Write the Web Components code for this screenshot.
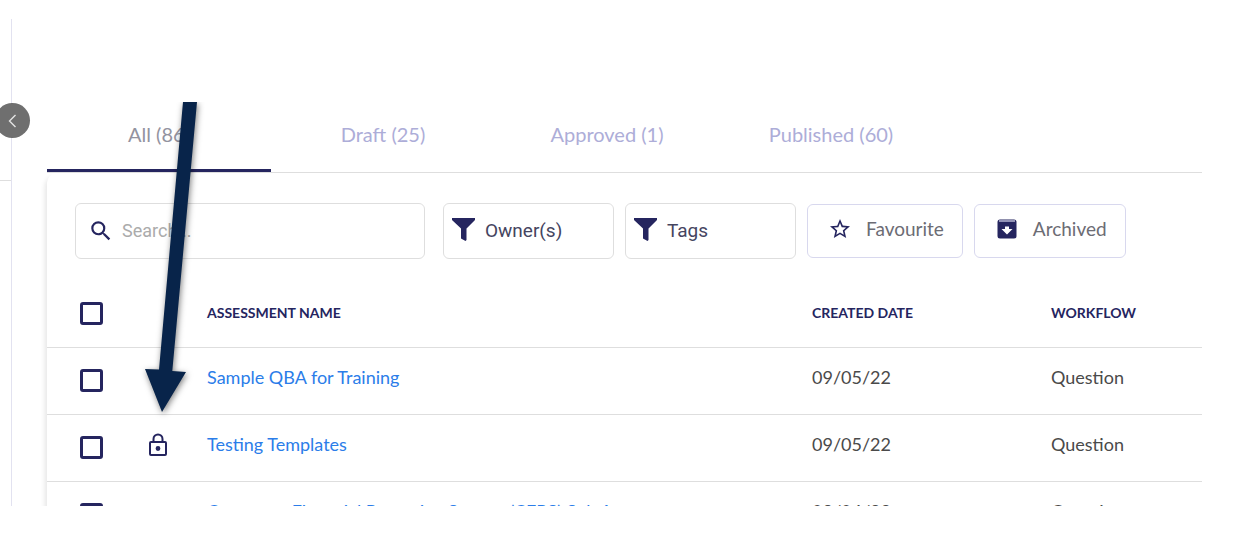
<!DOCTYPE html>
<html lang="en">
<head>
<meta charset="utf-8">
<meta name="viewport" content="width=device-width, initial-scale=1">
<title>Assessments</title>
<style>
  body {
    margin: 0; background: #fff; color: #4a4a4a;
    font: 18px/24px Lato, "Liberation Sans", sans-serif;
    --navy: #25255f; --line: #dedede;
  }
</style>
</head>
<body>
<qa-shell>
  <qa-sidebar slot="side"></qa-sidebar>
  <qa-tabs></qa-tabs>
  <qa-card>
    <qa-toolbar></qa-toolbar>
    <qa-table></qa-table>
  </qa-card>
  <qa-pointer slot="overlay"></qa-pointer>
</qa-shell>

<script>
'use strict';

const define = (name, html) => {
  customElements.define(name, class extends HTMLElement {
    constructor() {
      super();
      this.attachShadow({ mode: 'open' }).innerHTML = html;
    }
  });
};

/** Page frame: sidebar strip on the left, content on the right */
define('qa-shell', `
  <style>
    :host { display: flex; box-sizing: border-box; height: 100vh; padding: 19px 0 43px; }
    .frame { display: flex; flex: 1; min-width: 0; overflow: hidden; position: relative; }
    main { flex: 1; min-width: 0; margin-right: 40px; padding: 80px 0 0 35px; }
  </style>
  <div class="frame">
    <slot name="side"></slot>
    <main><slot></slot></main>
    <slot name="overlay"></slot>
  </div>
`);

define('qa-sidebar', `
  <style>
    :host { display: block; width: 11px; flex: none; border-right: 1px solid #e2e2f0; position: relative; }
    .head { height: 161px; border-bottom: 1px solid var(--line); }
    button {
      position: absolute; top: 84px; left: -5px; width: 35px; height: 35px; padding: 0;
      border: 0; border-radius: 50%; background: #6f6f6f; display: grid; place-items: center;
    }
  </style>
  <div class="head"></div>
  <button type="button" aria-label="Collapse menu">
    <svg width="16" height="16" viewBox="0 0 16 16" fill="none" stroke="#e4e4e4" stroke-width="1.4"><path d="M10.500 2 4.500 8l6 6"/></svg>
  </button>
`);

define('qa-tabs', `
  <style>
    :host { display: block; border-bottom: 1px solid var(--line); }
    nav { display: flex; }
    button {
      width: 224px; height: 73px; padding: 0; border: 0; border-bottom: 3px solid transparent;
      background: none; font: inherit; font-size: 20px; color: #adadd8;
    }
    button[aria-selected="true"] { color: #93939f; border-color: var(--navy); }
  </style>
  <nav role="tablist">
    <button role="tab" aria-selected="true">All (86)</button>
    <button role="tab" aria-selected="false">Draft (25)</button>
    <button role="tab" aria-selected="false">Approved (1)</button>
    <button role="tab" aria-selected="false">Published (60)</button>
  </nav>
`);

define('qa-card', `
  <style>
    :host {
      display: block; background: #fff; border-radius: 10px 0 0 0;
      box-shadow: -3px 3px 5px -1px rgba(0,0,0,.1);
      clip-path: inset(0 0 0 -10px);
    }
  </style>
  <slot></slot>
`);

define('qa-toolbar', `
  <style>
    :host { display: flex; align-items: center; padding: 30px 28px 21px; color: var(--navy); }
    svg { flex: none; }
    .search, button {
      box-sizing: border-box; display: flex; align-items: center;
      border: 1px solid #dedede; border-radius: 6px; background: #fff;
    }
    .search { width: 350px; height: 56px; padding: 0 12px; gap: 8px; }
    input {
      flex: 1; min-width: 0; border: 0; padding: 0; outline: 0; background: none;
      font: 18px/24px Roboto, sans-serif; color: #444;
    }
    input::placeholder { color: #ababab; opacity: 1; }
    .filter {
      width: 171px; height: 56px; margin-left: 11px; padding: 0 8px; gap: 10px;
      font: 19px/24px Roboto, sans-serif; color: #45455f;
    }
    .filter svg { margin-bottom: 4px; }
    .search + .filter { margin-left: 18px; }
    .toggle {
      height: 54px; margin-left: 11px; padding: 0 18px 4px 20px; gap: 14px;
      border-color: #d8d8ee; font: inherit; font-size: 19px; color: #6c6c74;
    }
    .toggle svg { color: var(--navy); }
  </style>
  <label class="search">
    <svg width="26" height="26" viewBox="0 0 24 24" fill="currentColor"><path d="M15.500 14h-.79l-.28-.27A6.470 6.470 0 0 0 16 9.500 6.500 6.500 0 1 0 9.500 16c1.610 0 3.090-.59 4.230-1.570l.27.28v.79l5 4.990L20.490 19l-4.990-5zm-6 0a4.500 4.500 0 1 1 0-9 4.500 4.500 0 0 1 0 9z"/></svg>
    <input type="text" placeholder="Search..." aria-label="Search">
  </label>
  <button type="button" class="filter">
    <svg width="23" height="23" viewBox="0 0 23 23" fill="#25255f"><path d="M0 0h23v2l-8.500 8.500V22l-1 1-4.500-2.500v-10L0 2z"/></svg>
    Owner(s)
  </button>
  <button type="button" class="filter">
    <svg width="23" height="23" viewBox="0 0 23 23" fill="#25255f"><path d="M0 0h23v2l-8.500 8.500V22l-1 1-4.500-2.500v-10L0 2z"/></svg>
    Tags
  </button>
  <button type="button" class="toggle">
    <svg width="24" height="24" viewBox="0 0 24 24" fill="currentColor"><path d="M22 9.240l-7.190-.62L12 2 9.190 8.630 2 9.240l5.460 4.730L5.820 21 12 17.270 18.180 21l-1.630-7.030L22 9.240zM12 15.400l-3.760 2.270 1-4.280-3.320-2.880 4.380-.38L12 6.100l1.710 4.040 4.380.38-3.320 2.880 1 4.280L12 15.400z"/></svg>
    Favourite
  </button>
  <button type="button" class="toggle">
    <svg width="24" height="24" viewBox="0 0 24 24"><rect x="2.500" y="2.500" width="19" height="19" rx="2.500" fill="currentColor"/><path d="M4 4h16" stroke="#b9b9d4" stroke-width="1.400"/><path d="M10 9.500h4v2.500h3.500L12 17.500 6.500 12H10z" fill="#fff"/></svg>
    Archived
  </button>
`);

const rows = [
  { name: 'Sample QBA for Training', date: '09/05/22', flow: 'Question' },
  { name: 'Testing Templates', date: '09/05/22', flow: 'Question', locked: true },
  { name: 'Corporate Financial Reporting System (CFRS) Sub A', date: '09/04/22', flow: 'Question' },
];

const lock = `<svg role="img" aria-label="Locked" width="20" height="24" viewBox="0 0 20 24" fill="none" stroke="#25255f" stroke-width="2"><rect x="2" y="9" width="16" height="13" rx="1"/><path d="M5.500 9V6a4.500 4.500 0 0 1 9 0v3"/><circle cx="10" cy="15.500" r="1.400" fill="#25255f"/></svg>`;

class QaTable extends HTMLElement {
  connectedCallback() {
    this.attachShadow({ mode: 'open' }).innerHTML = `
      <style>
        :host { display: block; }
        table { width: 100%; table-layout: fixed; border-collapse: collapse; }
        tr { height: 67px; border-bottom: 1px solid var(--line); }
        th, td { box-sizing: border-box; padding: 0; text-align: left; white-space: nowrap; }
        th { font-size: 14px; color: var(--navy); }
        td { padding-bottom: 8px; }
        th:first-child, td:first-child { padding: 0 0 0 33px; }
        .lock { padding: 0 0 6px 21px; }
        .check, .state { width: 80px; }
        .date { width: 239px; }
        .flow { width: 151px; }
        a { color: #2b7de9; text-decoration: none; }
        input {
          appearance: none; display: block; box-sizing: border-box; margin: 0;
          width: 23px; height: 23px; border: 3px solid var(--navy); border-radius: 3px;
        }
        input:checked { background: var(--navy); }
        svg { display: block; }
      </style>
      <table>
        <thead>
          <tr>
            <th class="check"><input type="checkbox" aria-label="Select all"></th>
            <th class="state"></th>
            <th>ASSESSMENT NAME</th>
            <th class="date">CREATED DATE</th>
            <th class="flow">WORKFLOW</th>
          </tr>
        </thead>
        <tbody>
          ${rows.map(r => `
            <tr>
              <td><input type="checkbox" aria-label="Select ${r.name}"></td>
              <td class="lock">${r.locked ? lock : ''}</td>
              <td><a href="#">${r.name}</a></td>
              <td>${r.date}</td>
              <td>${r.flow}</td>
            </tr>`).join('')}
        </tbody>
      </table>
    `;
  }
}
customElements.define('qa-table', QaTable);

/** Callout arrow that points at the lock icon */
define('qa-pointer', `
  <style>
    :host { position: absolute; left: 140px; top: 83px; pointer-events: none; overflow: hidden; }
    svg { display: block; filter: drop-shadow(1px 2px 3px rgba(0,0,0,.5)); }
  </style>
  <svg width="65" height="320" viewBox="0 0 65 320" fill="#08244a">
    <path d="M43 0h14L32.300 269l13.700 1L22 310 5 267l14 .5z"/>
  </svg>
`);
</script>
</body>
</html>
